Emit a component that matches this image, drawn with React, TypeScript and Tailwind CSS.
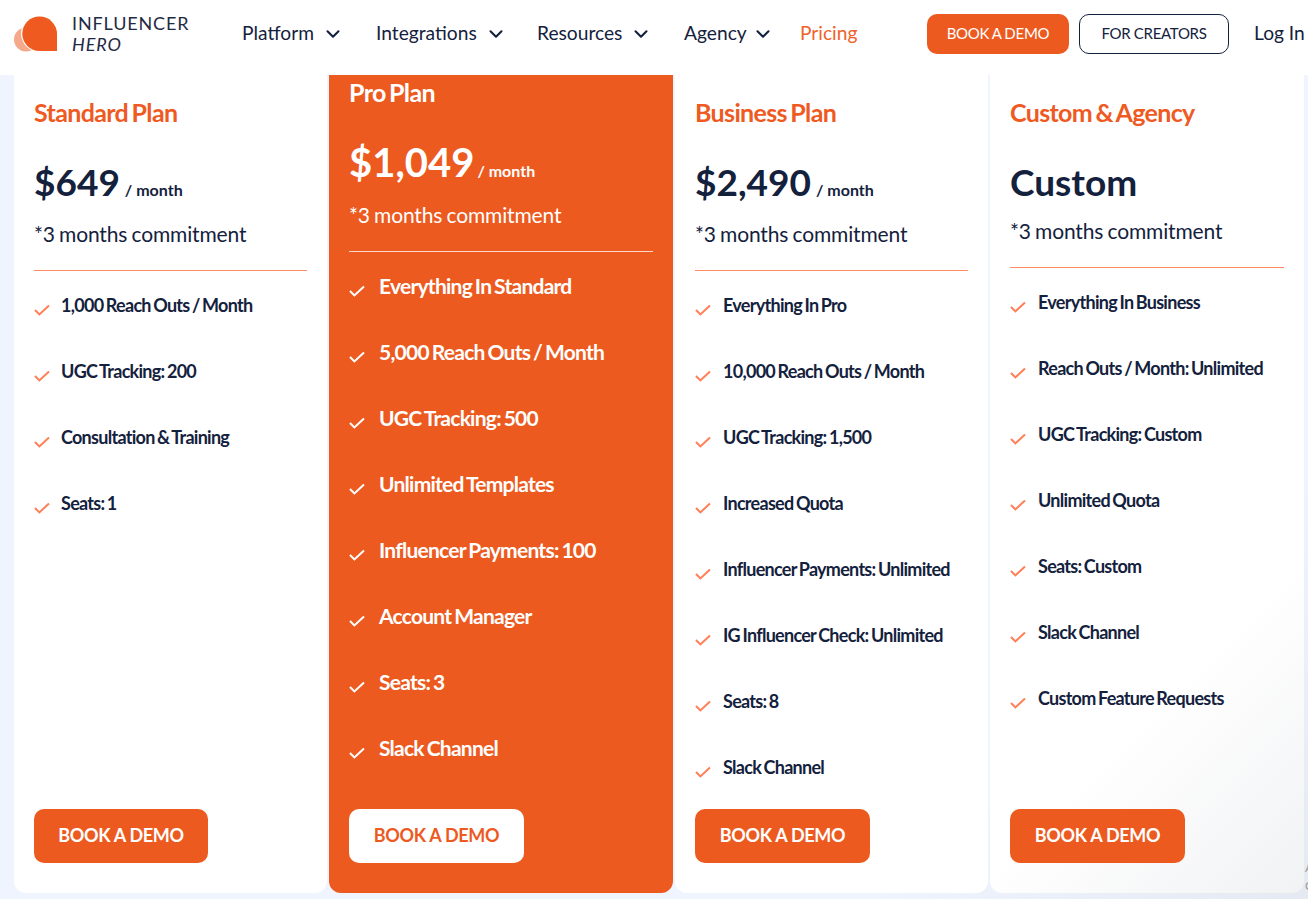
import React from "react";
import { ChevronDown } from "lucide-react";

const navy = "text-[#14213d]";

function Check({ white }: { white?: boolean }) {
  return (
    <svg width="16" height="12" viewBox="0 0 16 12" fill="none" className="shrink-0 mt-[11px]">
      <path d="M1 6 L5.400 10.400 L15 1.400" stroke={white ? "#ffffff" : "#ff7f57"} strokeWidth="2" />
    </svg>
  );
}

function Feature({ text, wide }: { text: string; wide?: boolean }) {
  return (
    <li className={`flex items-start h-[66px] ${wide ? "gap-[12px]" : "gap-[11px]"}`}>
      <Check />
      <span className={`text-[18px] leading-[24px] font-bold tracking-[-0.72px] [word-spacing:-1.2px] ${navy}`}>{text}</span>
    </li>
  );
}

function Card({
  title, price, month, features, custom, first,
}: { title: string; price: string; month?: boolean; features: string[]; custom?: boolean; first?: boolean }) {
  return (
    <section className={`relative flex flex-col rounded-b-[12px] px-[20px] h-[818px] ${custom ? "w-[314px] bg-[linear-gradient(135deg,#ffffff_70%,#f1f2f4_100%)]" : "w-[313px] bg-white"}`}>
      <h2 className="mt-[21px] text-[25px] leading-[32px] font-bold tracking-[-0.65px] [word-spacing:-2px] text-[#ee5a1f]">{title}</h2>
      <div className="flex items-baseline mt-[31px]">
        <span className={`text-[37px] leading-[46px] font-bold ${navy}`}>{price}</span>
        {month && <span className={`ml-[5px] text-[16px] font-bold ${navy}`}>/ month</span>}
      </div>
      <p className={`${custom ? "mt-[13px]" : "mt-[16px]"} text-[21px] leading-[26px] tracking-[-0.15px] [word-spacing:-1px] ${navy}`}>*3 months commitment</p>
      <hr className="mt-[23px] border-0 h-px bg-[#ff8a63]" />
      <ul className="mt-[22px] flex-1 min-h-0 m-0 p-0 list-none">
        {features.map((f) => <Feature key={f} text={f} wide={!first} />)}
      </ul>
      <a className={`mb-[30px] pb-[2px] flex items-center justify-center ${first ? "w-[174px]" : "w-[175px]"} h-[54px] rounded-[10px] bg-[#ec5a1f] text-white text-[18px] font-bold tracking-[-0.3px]`}>BOOK A DEMO</a>
    </section>
  );
}

function NavItem({ label, w, tight }: { label: string; w: string; tight?: boolean }) {
  return (
    <span className={`flex items-center text-[19.200px] ${w} ${navy}`}>
      {label}
      <ChevronDown size={22} strokeWidth={2.300} className={`${tight ? "ml-[5px]" : "ml-[8px]"} mt-[1px]`} />
    </span>
  );
}

export default function App() {
  return (
    <div className="relative w-[1308px] h-[899px] overflow-hidden bg-[linear-gradient(135deg,#f0f4fe_80%,#e5e9f1_100%)] font-['Lato','Liberation_Sans',sans-serif]">
      <header className="relative z-10 flex items-center h-[75px] bg-white pl-[14px] pb-[8px]">
        <div className="flex items-center w-[228px]">
          <svg width="44" height="36" viewBox="0 0 44 36" className="shrink-0">
            <circle cx="12" cy="23.500" r="12" fill="#f5a98a" />
            <circle cx="25.500" cy="17.500" r="18.500" fill="#ffffff" />
            <path d="M25.500 0.500 A17.500 17.500 0 0 1 43 18 V35 H25.500 A17.250 17.250 0 0 1 25.500 0.500Z" fill="#ee5a1f" />
          </svg>
          <div className="ml-[14px] text-[18px] leading-[21px] tracking-[0.85px] text-[#1f2a44]">
            <div>INFLUENCER</div>
            <div className="italic">HERO</div>
          </div>
        </div>
        <nav className="flex items-center">
          <NavItem label="Platform" w="w-[134px]" />
          <NavItem label="Integrations" w="w-[161px]" />
          <NavItem label="Resources" w="w-[147px]" />
          <NavItem label="Agency" w="w-[116px]" tight />
          <span className="w-[127px] text-[19.200px] text-[#f0622a]">Pricing</span>
        </nav>
        <a className="flex items-center justify-center w-[142px] h-[40px] rounded-[10px] bg-[#ec5a1f] text-white text-[15px] tracking-[-0.25px] [word-spacing:-0.5px]">BOOK A DEMO</a>
        <a className={`ml-[10px] flex items-center justify-center w-[150px] h-[40px] rounded-[10px] border border-[#14213d] bg-white text-[15px] tracking-[-0.3px] ${navy}`}>FOR CREATORS</a>
        <span className={`ml-[25px] whitespace-nowrap text-[19.200px] ${navy}`}>Log In</span>
      </header>
      <main className="flex gap-[2px] pl-[14px]">
        <Card first title="Standard Plan" price="$649" month features={["1,000 Reach Outs / Month","UGC Tracking: 200","Consultation & Training","Seats: 1"]} />
        <section className="flex flex-col w-[344px] h-[818px] rounded-b-[12px] bg-[#ec5a1f] px-[20px] text-white">
          <h2 className="mt-[1px] text-[25px] leading-[32px] font-bold tracking-[-0.65px] [word-spacing:-2px]">Pro Plan</h2>
          <div className="flex items-baseline mt-[29px]">
            <span className="text-[40px] leading-[50px] font-bold">$1,049</span>
            <span className="ml-[3px] text-[16px] font-bold">/ month</span>
          </div>
          <p className="mt-[15px] text-[21px] leading-[26px] tracking-[-0.15px] [word-spacing:-1px]">*3 months commitment</p>
          <hr className="mt-[23px] border-0 h-px bg-[#ffd9c9]" />
          <ul className="mt-[22px] flex-1 min-h-0 m-0 p-0 list-none">
            {["Everything In Standard","5,000 Reach Outs / Month","UGC Tracking: 500","Unlimited Templates","Influencer Payments: 100","Account Manager","Seats: 3","Slack Channel"].map((f) => (
              <li key={f} className="flex items-start gap-[14px] h-[66px]">
                <Check white />
                <span className="text-[21px] leading-[24px] font-bold tracking-[-0.75px] [word-spacing:-1.5px]">{f}</span>
              </li>
            ))}
          </ul>
          <a className="mb-[30px] pb-[2px] flex items-center justify-center w-[175px] h-[54px] rounded-[10px] bg-white text-[#ec5a1f] text-[18px] font-bold tracking-[-0.3px]">BOOK A DEMO</a>
        </section>
        <Card title="Business Plan" price="$2,490" month features={["Everything In Pro","10,000 Reach Outs / Month","UGC Tracking: 1,500","Increased Quota","Influencer Payments: Unlimited","IG Influencer Check: Unlimited","Seats: 8","Slack Channel"]} />
        <Card custom title="Custom & Agency" price="Custom" features={["Everything In Business","Reach Outs / Month: Unlimited","UGC Tracking: Custom","Unlimited Quota","Seats: Custom","Slack Channel","Custom Feature Requests"]} />
      </main>
      <span className="absolute left-[1305px] top-[861px] text-[12px] leading-[14px] text-[#9a9a9a]">A</span>
      <span className="absolute left-[1305px] top-[879px] text-[12px] leading-[14px] text-[#9a9a9a]">C</span>
    </div>
  );
}
